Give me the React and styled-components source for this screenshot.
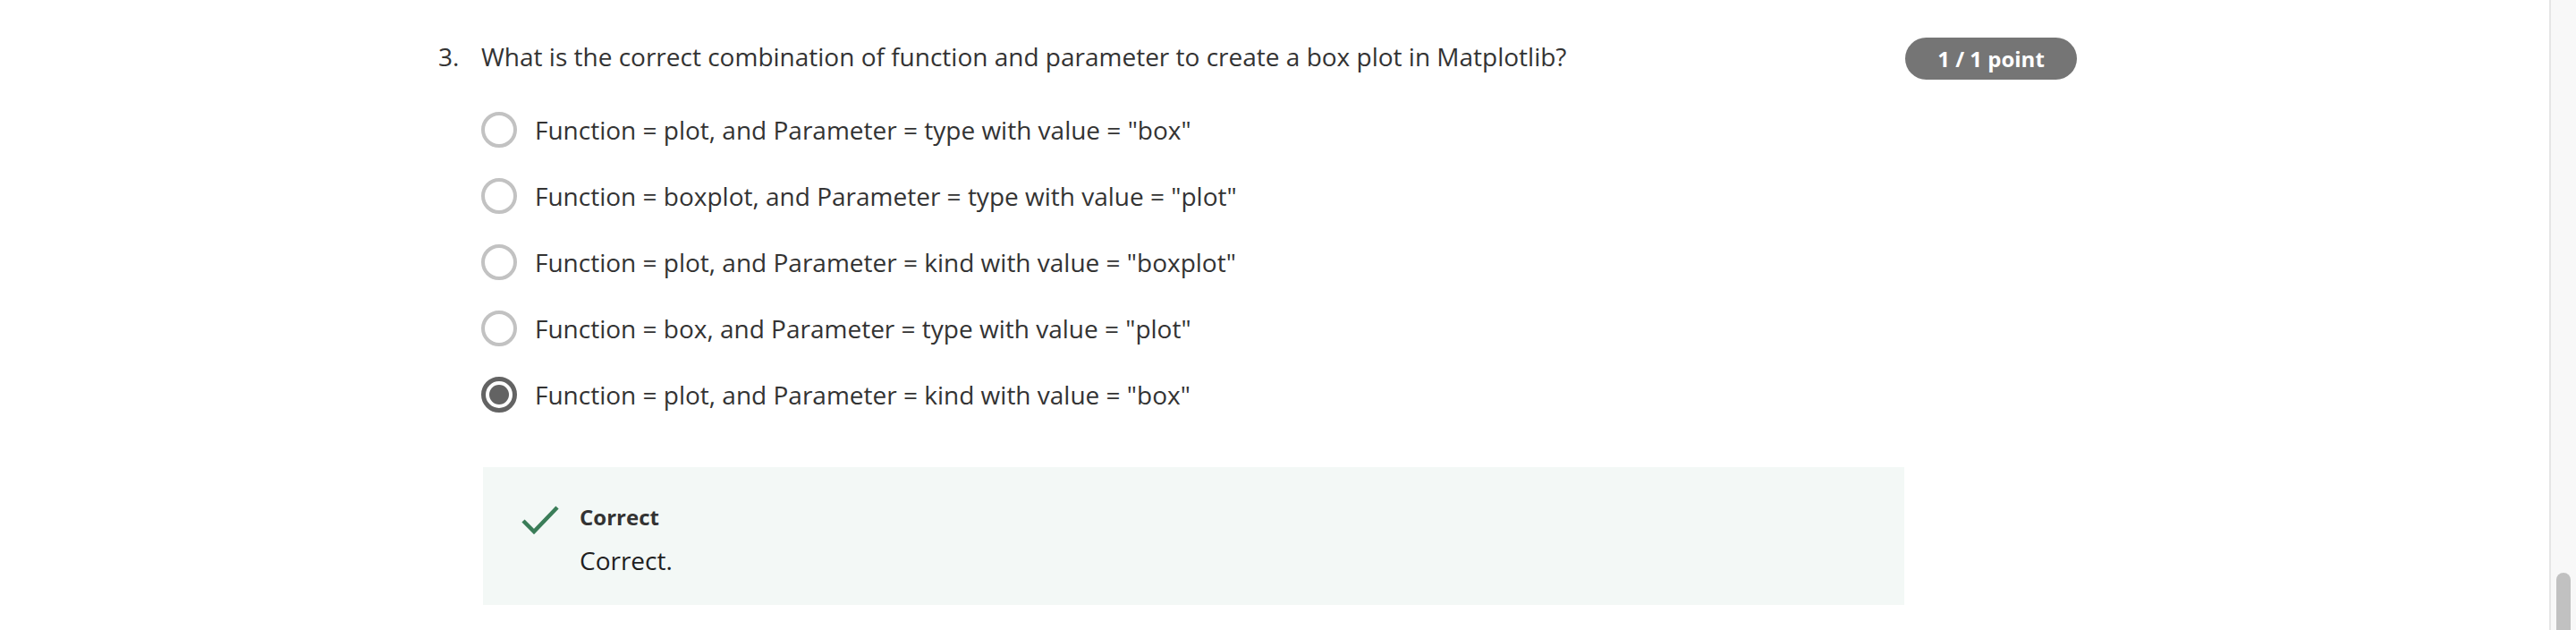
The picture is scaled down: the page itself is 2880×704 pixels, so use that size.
import React from "react";
import styled, { createGlobalStyle } from "styled-components";

const options = [
  { id: 1, label: 'Function = plot, and Parameter = type with value = "box"' },
  { id: 2, label: 'Function = boxplot, and Parameter = type with value = "plot"' },
  { id: 3, label: 'Function = plot, and Parameter = kind with value = "boxplot"' },
  { id: 4, label: 'Function = box, and Parameter = type with value = "plot"' },
  { id: 5, label: 'Function = plot, and Parameter = kind with value = "box"', checked: true },
];

const App = () => {
  return (
    <>
      <GlobalStyle />
      <Screen>
        <Main>
          <Question>
            <QuestionHead>
              <Number>3.</Number>
              <QuestionText>
                What is the correct combination of function and parameter to create a box plot in Matplotlib?
              </QuestionText>
              <Badge>1 / 1 point</Badge>
            </QuestionHead>

            <OptionList>
              {options.map((o) => (
                <Option key={o.id}>
                  <Radio $checked={o.checked} />
                  <OptionLabel>{o.label}</OptionLabel>
                </Option>
              ))}
            </OptionList>

            {/* 정답 피드백 */}
            <Feedback>
              <CheckIcon viewBox="0 0 42 32">
                <path d="M2 17 L14 29 L40 2" fill="none" stroke="#3a7d58" strokeWidth="4.5" />
              </CheckIcon>
              <FeedbackBody>
                <FeedbackTitle>Correct</FeedbackTitle>
                <FeedbackText>Correct.</FeedbackText>
              </FeedbackBody>
            </Feedback>
          </Question>
        </Main>

        <ScrollTrack>
          <ScrollThumb />
        </ScrollTrack>
      </Screen>
    </>
  );
};

export default App;

const GlobalStyle = createGlobalStyle`
  html, body {
    margin: 0;
    padding: 0;
    background: #fff;
    overflow: hidden;
  }
  body {
    font-family: "Open Sans", "Noto Sans", sans-serif;
    color: #333;
  }
`;

//전체 화면
const Screen = styled.div`
  display: flex;
  width: 2880px;
  height: 704px;
  overflow: hidden;
`;

const Main = styled.div`
  flex: 1;
  padding-left: 490px;
  box-sizing: border-box;
`;

const Question = styled.div`
  width: 1832px;
  padding-top: 42px;
`;

//질문 줄
const QuestionHead = styled.div`
  display: flex;
  align-items: flex-start;
`;

const Number = styled.span`
  width: 48px;
  flex-shrink: 0;
  font-size: 28px;
  line-height: 40px;
  margin-top: 1px;
`;

const QuestionText = styled.div`
  flex: 1;
  font-size: 28px;
  line-height: 40px;
  margin-top: 1px;
`;

const Badge = styled.div`
  width: 192px;
  height: 47px;
  border-radius: 24px;
  background-color: #757575;
  color: #fff;
  font-size: 24px;
  font-weight: 700;
  display: flex;
  align-items: center;
  justify-content: center;
`;

//보기 목록
const OptionList = styled.div`
  margin: 19px 0 0 48px;
  display: flex;
  flex-direction: column;
`;

const Option = styled.label`
  display: flex;
  align-items: center;
  gap: 20px;
  height: 74px;
`;

const Radio = styled.span`
  width: 40px;
  height: 40px;
  box-sizing: border-box;
  border-radius: 50%;
  border: ${(p) => (p.$checked ? "5px solid #636363" : "4px solid #c2c2c2")};
  display: flex;
  align-items: center;
  justify-content: center;
  flex-shrink: 0;
  &::after {
    content: "";
    display: ${(p) => (p.$checked ? "block" : "none")};
    width: 22px;
    height: 22px;
    border-radius: 50%;
    background: #636363;
  }
`;

const OptionLabel = styled.span`
  font-size: 28px;
  line-height: 40px;
  color: #333;
`;

//피드백 박스
const Feedback = styled.div`
  margin: 44px 0 0 50px;
  width: 1589px;
  height: 154px;
  box-sizing: border-box;
  background-color: #f3f8f6;
  padding: 40px 0 0 43px;
  display: flex;
  align-items: flex-start;
  gap: 23px;
`;

const CheckIcon = styled.svg`
  width: 42px;
  height: 32px;
  margin-top: 3px;
  flex-shrink: 0;
`;

const FeedbackBody = styled.div`
  display: flex;
  flex-direction: column;
`;

const FeedbackTitle = styled.div`
  font-size: 24px;
  font-weight: 700;
  line-height: 32px;
  color: #333;
`;

const FeedbackText = styled.div`
  margin-top: 12px;
  font-size: 28px;
  line-height: 40px;
  color: #1f1f1f;
`;

//스크롤바
const ScrollTrack = styled.div`
  width: 30px;
  height: 704px;
  box-sizing: border-box;
  background: #f8f8f8;
  border-left: 2px solid #e6e6e6;
  display: flex;
  flex-direction: column;
  align-items: center;
`;

const ScrollThumb = styled.div`
  margin-top: auto;
  width: 16px;
  height: 64px;
  background: #c1c1c1;
  border-radius: 8px 8px 0 0;
`;
